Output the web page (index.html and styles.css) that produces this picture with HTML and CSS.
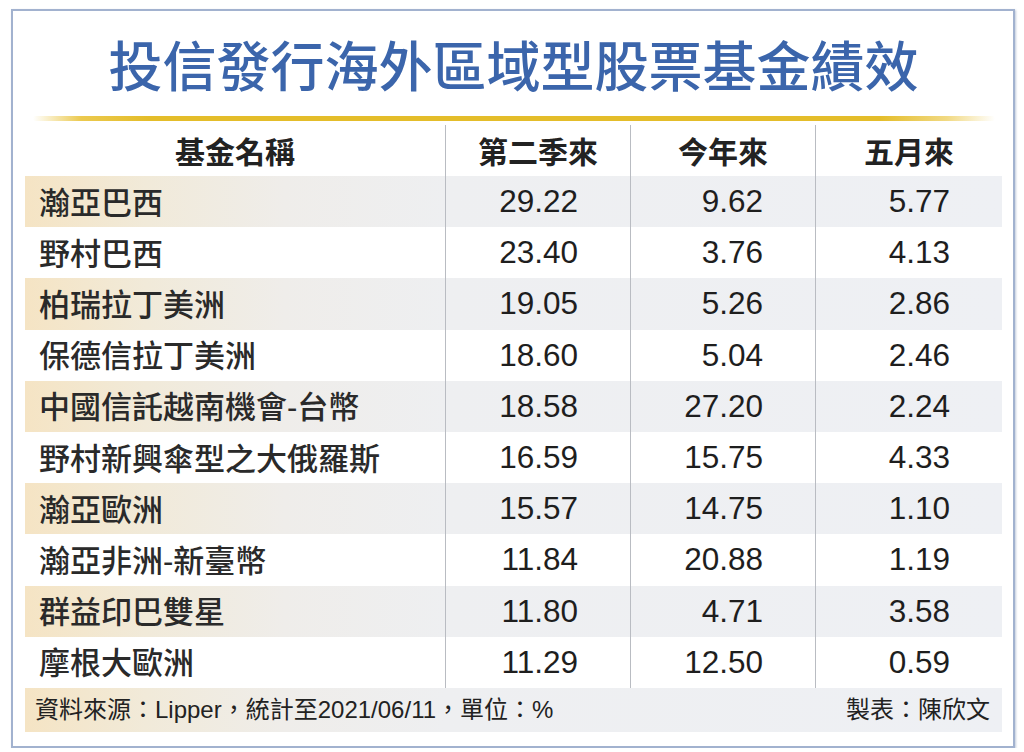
FILE: index.html
```html
<!DOCTYPE html>
<html lang="zh-Hant">
<head>
<meta charset="utf-8">
<title>投信發行海外區域型股票基金績效</title>
<link rel="stylesheet" href="styles.css">
</head>
<body>
<div class="frame">
  <h1 class="title">投信發行海外區域型股票基金績效</h1>
  <div class="gold-line"></div>
  <div class="table">
    <div class="row head">
      <div class="cell name-h">基金名稱</div>
      <div class="cell num-h">第二季來</div>
      <div class="cell num-h">今年來</div>
      <div class="cell num-h">五月來</div>
    </div>
    <div class="row shade">
      <div class="cell name">瀚亞巴西</div>
      <div class="cell num">29.22</div>
      <div class="cell num">9.62</div>
      <div class="cell num">5.77</div>
    </div>
    <div class="row">
      <div class="cell name">野村巴西</div>
      <div class="cell num">23.40</div>
      <div class="cell num">3.76</div>
      <div class="cell num">4.13</div>
    </div>
    <div class="row shade">
      <div class="cell name">柏瑞拉丁美洲</div>
      <div class="cell num">19.05</div>
      <div class="cell num">5.26</div>
      <div class="cell num">2.86</div>
    </div>
    <div class="row">
      <div class="cell name">保德信拉丁美洲</div>
      <div class="cell num">18.60</div>
      <div class="cell num">5.04</div>
      <div class="cell num">2.46</div>
    </div>
    <div class="row shade">
      <div class="cell name">中國信託越南機會-台幣</div>
      <div class="cell num">18.58</div>
      <div class="cell num">27.20</div>
      <div class="cell num">2.24</div>
    </div>
    <div class="row">
      <div class="cell name">野村新興傘型之大俄羅斯</div>
      <div class="cell num">16.59</div>
      <div class="cell num">15.75</div>
      <div class="cell num">4.33</div>
    </div>
    <div class="row shade">
      <div class="cell name">瀚亞歐洲</div>
      <div class="cell num">15.57</div>
      <div class="cell num">14.75</div>
      <div class="cell num">1.10</div>
    </div>
    <div class="row">
      <div class="cell name">瀚亞非洲-新臺幣</div>
      <div class="cell num">11.84</div>
      <div class="cell num">20.88</div>
      <div class="cell num">1.19</div>
    </div>
    <div class="row shade">
      <div class="cell name">群益印巴雙星</div>
      <div class="cell num">11.80</div>
      <div class="cell num">4.71</div>
      <div class="cell num">3.58</div>
    </div>
    <div class="row">
      <div class="cell name">摩根大歐洲</div>
      <div class="cell num">11.29</div>
      <div class="cell num">12.50</div>
      <div class="cell num">0.59</div>
    </div>
    <div class="footer">
      <span class="source">資料來源：Lipper，統計至2021/06/11，單位：%</span>
      <span class="maker">製表：陳欣文</span>
    </div>
  </div>
</div>
</body>
</html>
```

FILE: styles.css
```css
html, body {
  margin: 0;
  padding: 0;
  background: #ffffff;
}

body {
  font-family: "Liberation Sans", "Noto Sans CJK TC", sans-serif;
  color: #1e1e1e;
}

.frame {
  box-sizing: border-box;
  width: 1004px;
  height: 739px;
  margin: 9px 0 0 11px;
  border: 2px solid #a2b2cf;
  box-shadow: 1px 1px 2px rgba(120, 140, 175, 0.45);
  padding: 26px 11px 0 12px;
  display: flex;
  flex-direction: column;
}

.title {
  margin: 0;
  font-family: "Noto Sans CJK TC", sans-serif;
  font-size: 54px;
  line-height: 54px;
  font-weight: 500;
  color: #3b65ab;
  text-align: center;
}

.gold-line {
  height: 5px;
  margin: 25px 7px 4px 8px;
  border-radius: 3px;
  background: linear-gradient(90deg,
    rgba(232, 192, 48, 0) 0%,
    rgba(232, 192, 48, 0.85) 5%,
    #e4bd2a 12%,
    #e4bd2a 88%,
    rgba(232, 192, 48, 0.6) 95%,
    rgba(232, 192, 48, 0) 100%);
}

.table {
  display: flex;
  flex-direction: column;
}

.row {
  display: grid;
  grid-template-columns: 420px 185px 185px 1fr;
  height: 51.2px;
}

.row.head {
  height: 51px;
}

.row.shade {
  background: linear-gradient(90deg,
    #f5e4c4 0px,
    #f1ead9 120px,
    #efedea 260px,
    #eeeff1 420px,
    #eef0f4 100%);
}

.cell {
  display: flex;
  align-items: center;
  font-size: 31px;
  white-space: nowrap;
}

.cell + .cell {
  border-left: 1px solid #b9bcc2;
}

.name-h,
.num-h {
  justify-content: center;
  font-family: "Noto Sans CJK TC", sans-serif;
  font-weight: 700;
  font-size: 30px;
  color: #222222;
  padding-bottom: 2px;
}

.name {
  padding-left: 14px;
  padding-bottom: 3px;
  font-size: 31px;
  font-weight: 500;
  color: #2a2a2a;
}

.num {
  justify-content: flex-end;
  padding-right: 52px;
  font-size: 31.5px;
  font-weight: 400;
}

.footer {
  height: 44px;
  display: flex;
  align-items: center;
  justify-content: space-between;
  padding: 0 12px 4px 10px;
  box-sizing: border-box;
  font-size: 24px;
  color: #222222;
  background: linear-gradient(90deg,
    #f5e4c4 0px,
    #f1ead9 120px,
    #efedea 260px,
    #eeeff1 420px,
    #eef0f4 100%);
}
```
